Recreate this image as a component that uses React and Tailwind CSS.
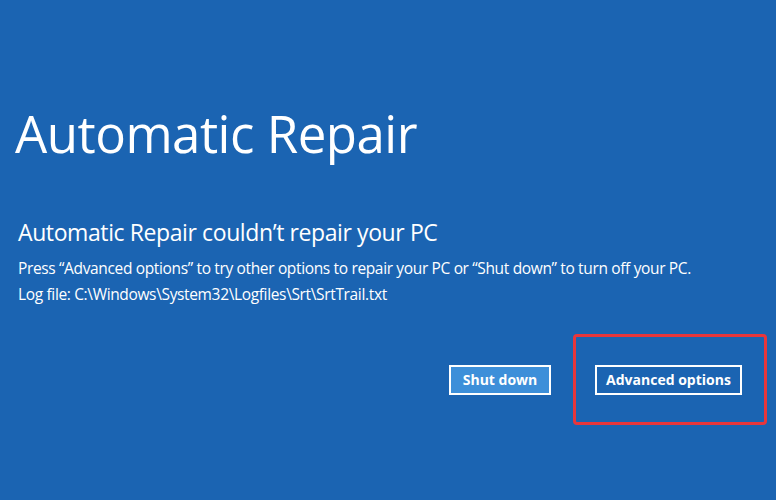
export default function App() {
  return (
    <div className="w-[776px] h-[500px] bg-[#1b64b2] text-white overflow-hidden flex flex-col" style={{ fontFamily: '"Open Sans", "Noto Sans", sans-serif' }}>
      <h1 className="mt-[97px] ml-[15px] text-[51px] leading-[72px] font-normal tracking-[-0.5px]">Automatic Repair</h1>
      <h2 className="mt-[48px] ml-[18px] text-[23px] leading-[30px] font-normal tracking-[-0.4px]">Automatic Repair couldn’t repair your PC</h2>
      <div className="mt-[8px] ml-[18px] text-[15.5px] leading-[26px] tracking-[-0.35px]">
        <p>Press “Advanced options” to try other options to repair your PC or “Shut down” to turn off your PC.</p>
        <p>Log file: C:\Windows\System32\Logfiles\Srt\SrtTrail.txt</p>
      </div>
      <div className="mt-[27px] flex items-center">
        <button className="ml-[449px] w-[102px] h-[30px] border-2 border-white bg-[#3d8fd9] text-[14px] font-bold">Shut down</button>
        <div className="ml-[22px] w-[194px] h-[91px] border-[3px] border-[#e8363c] rounded-[4px] flex items-center pl-[19px]">
          <button className="w-[147px] h-[30px] border-2 border-white text-[14px] font-bold">Advanced options</button>
        </div>
      </div>
    </div>
  );
}
